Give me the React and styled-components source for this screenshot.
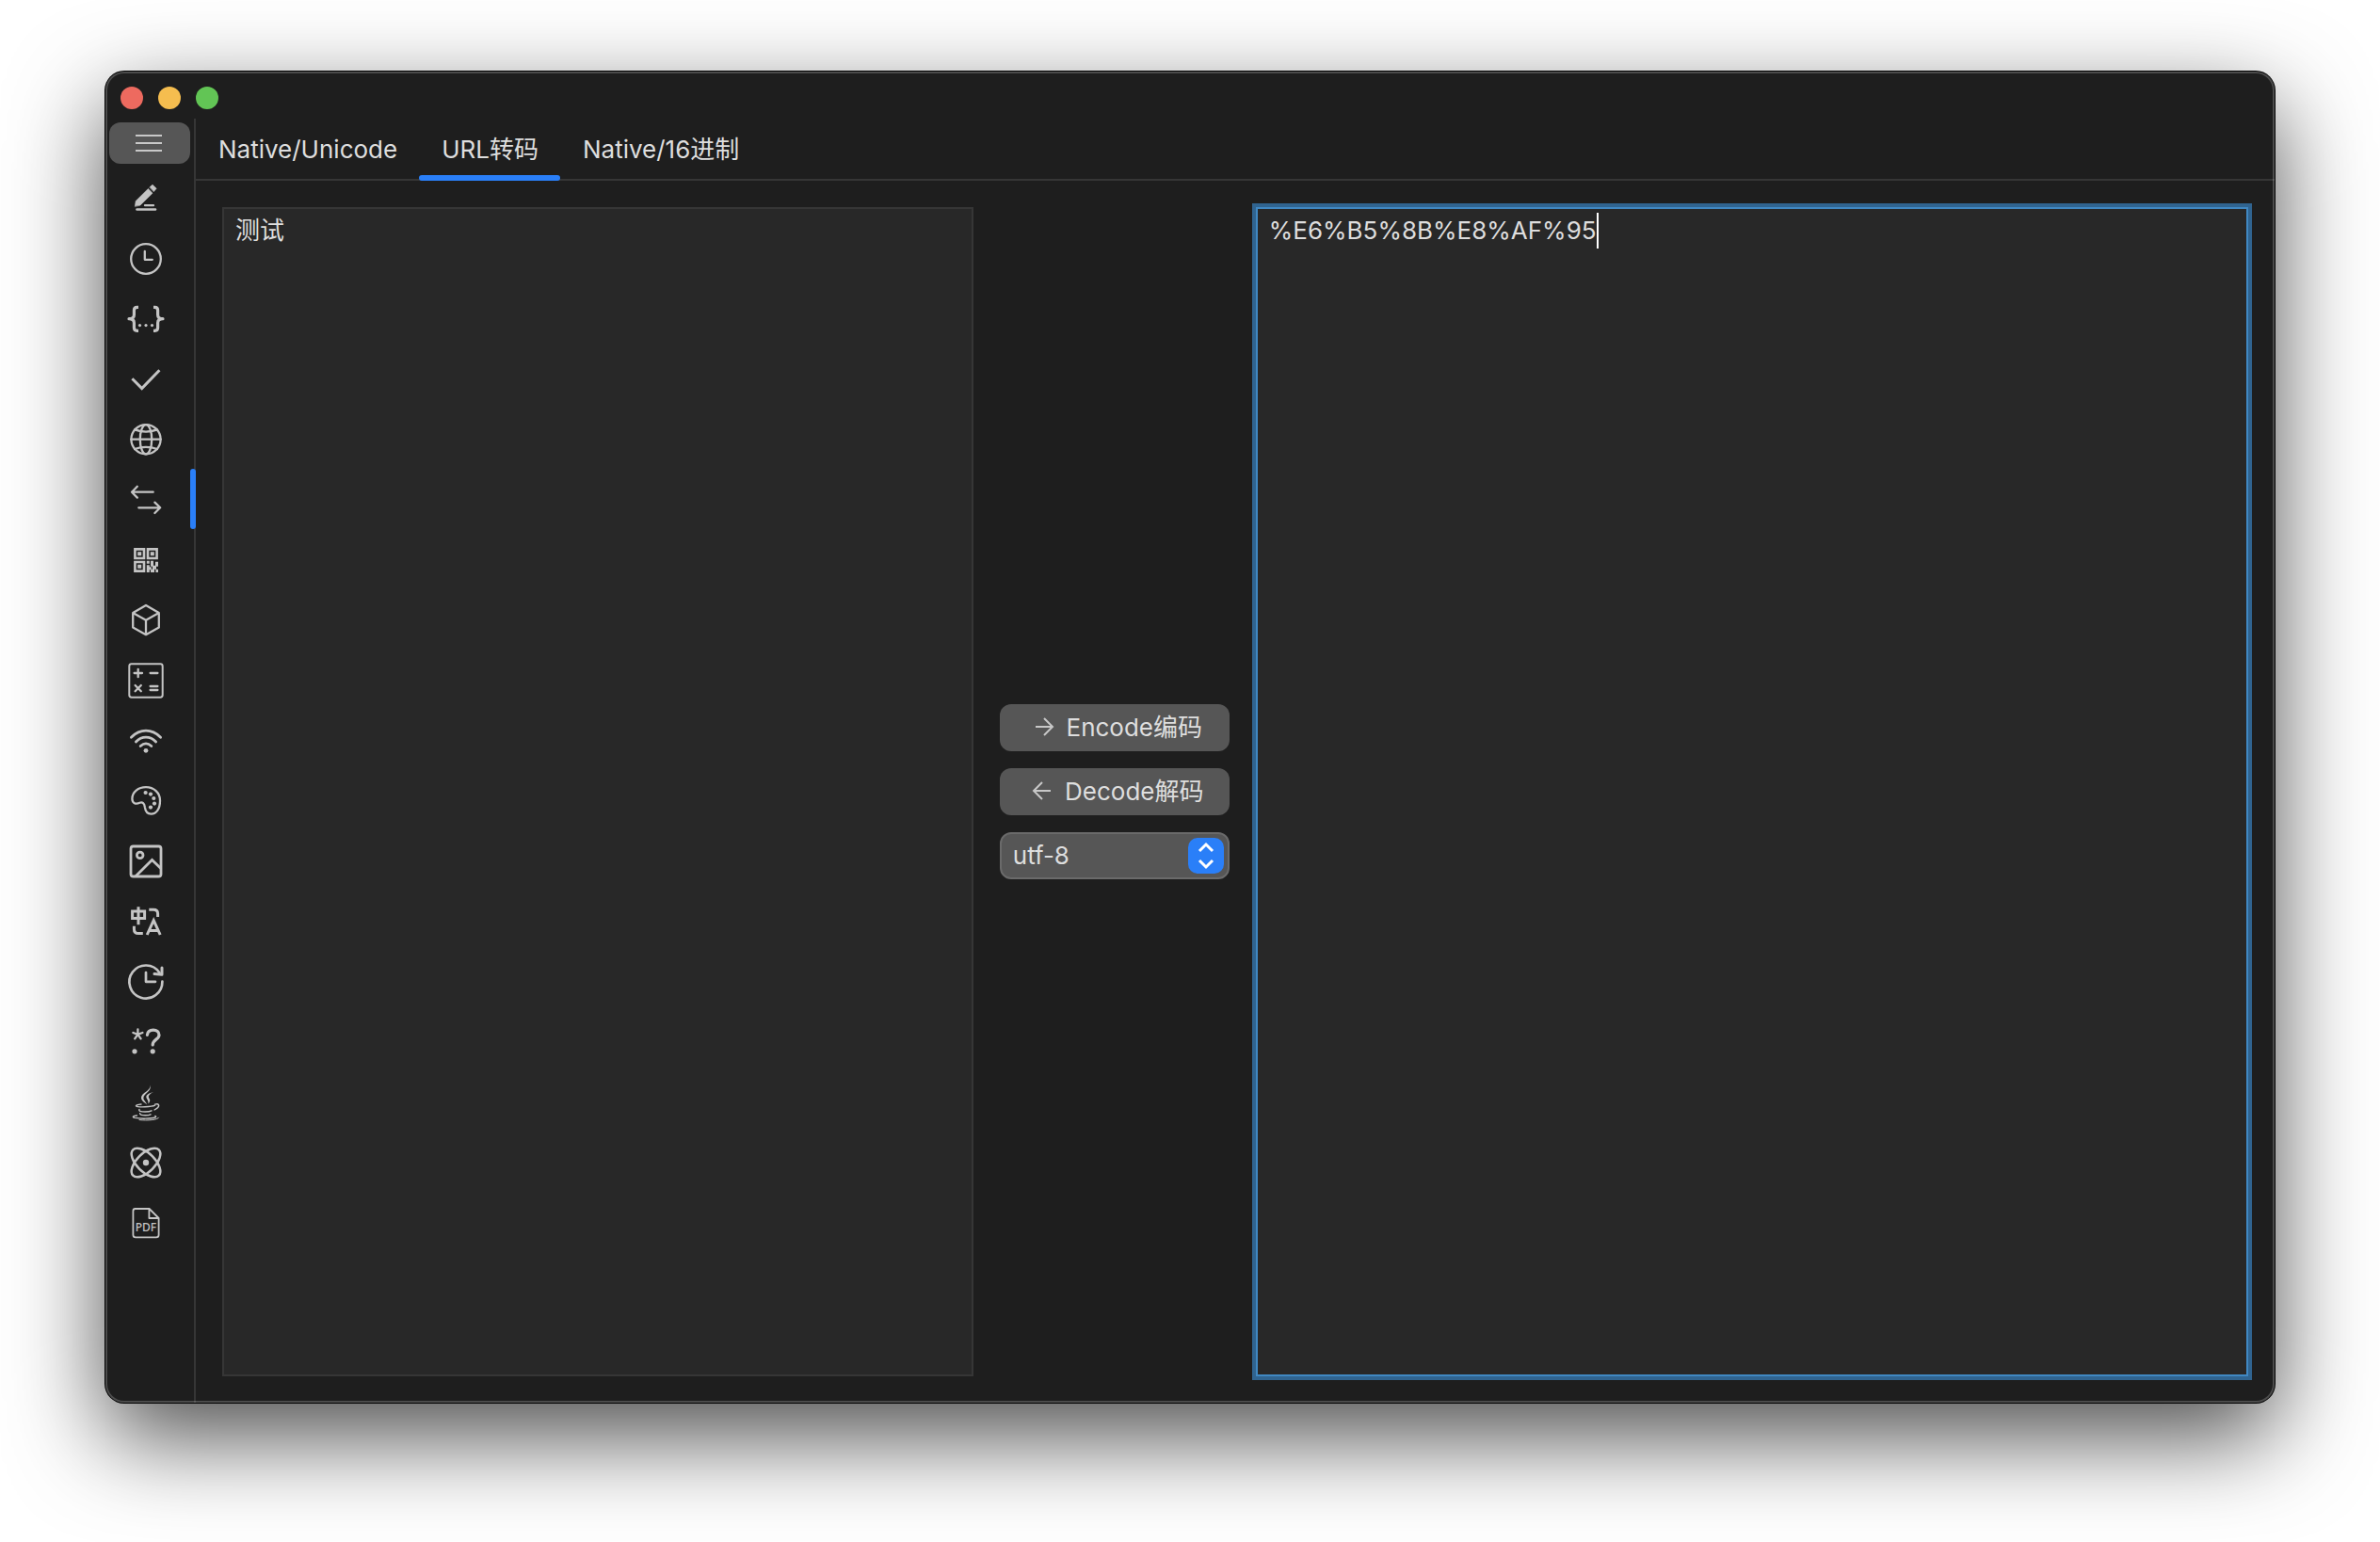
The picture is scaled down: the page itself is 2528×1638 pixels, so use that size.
import { useEffect, useRef, useState } from 'react';
import styled, { createGlobalStyle, css } from 'styled-components';

//ICONS
const icons = {
  edit: (
    <>
      <path
        d='M8.4 29 L9.2 23.6 L22.4 10.4 L27 15.2 L14 28 Z M24 8.8 L27 6.2 L31.2 10.2 L28.4 13.4 Z'
        fill='currentColor'
        strokeWidth='0.6'
      />
      <path d='M19 28.2 H28' />
      <path d='M10.5 32.5 H30' strokeWidth='2.6' />
    </>
  ),
  clock: (
    <>
      <circle cx='20' cy='21' r='15.8' />
      <path d='M18.8 13 V21.8 H26.8' />
    </>
  ),
  json: (
    <>
      <path
        d='M12 8.3 H10.5 Q7.4 8.3 7.4 11.5 V16.5 Q7.4 20.7 2 20.7 Q7.4 20.7 7.4 25 V30 Q7.4 33.3 10.5 33.3 H12'
        strokeWidth='3.2'
        strokeLinecap='butt'
      />
      <path
        d='M28 8.3 H29.5 Q32.6 8.3 32.6 11.5 V16.5 Q32.6 20.7 38 20.7 Q32.6 20.7 32.6 25 V30 Q32.6 33.3 29.5 33.3 H28'
        strokeWidth='3.2'
        strokeLinecap='butt'
      />
      <g fill='currentColor' stroke='none'>
        <circle cx='13.5' cy='27.6' r='1.6' />
        <circle cx='20' cy='27.6' r='1.6' />
        <circle cx='26.5' cy='27.6' r='1.6' />
      </g>
    </>
  ),
  check: (
    <path
      d='M5.4 20.2 L15.7 30.6 L34.4 11.3'
      strokeWidth='3'
      strokeLinecap='butt'
      strokeLinejoin='miter'
    />
  ),
  globe: (
    <>
      <circle cx='20' cy='20.7' r='15.6' />
      <ellipse cx='20' cy='20.7' rx='6.2' ry='15.6' />
      <path d='M4.3 20.7 H35.7 M8 10.4 Q20 14.8 32 10.4 M8 31 Q20 26.6 32 31' />
    </>
  ),
  swap: (
    <path d='M27.7 12.7 H5 M10.8 6.8 L5 12.7 L10.8 18.6 M12.3 29.3 H35.2 M29.4 23.6 L35.2 29.3 L29.4 35' />
  ),
  qrcode: (
    <>
      <path
        d='M8.4 9.4 H18 V19 H8.4 Z M22 9.4 H31.6 V19 H22 Z M8.4 23 H18 V32.6 H8.4 Z'
        strokeWidth='2.6'
        strokeLinejoin='miter'
      />
      <path
        d='M11.2 12.2h4v4h-4z M24.8 12.2h4v4h-4z M11.2 25.8h4v4h-4z M20.8 21.8h3v3h-3z M25 21.8h3v5h2v-4h3v5h-2v3h-4v-3h-2z M20.8 26.3h3v2h2v3h-2v2.6h-3z M25 30.7h4v3.2h-4z M30.4 30.7h2.6v3.2h-2.6z'
        fill='currentColor'
        stroke='none'
      />
    </>
  ),
  cube: (
    <path d='M20 5 L33.8 13 V28.6 L20 36.2 L6.2 28.6 V13 Z M6.2 13 L20 20.8 L33.8 13 M20 20.8 V36.2' />
  ),
  calculator: (
    <>
      <rect x='2.3' y='3.3' width='35.4' height='35.4' rx='2.4' strokeWidth='2' />
      <path d='M7.6 13 H16 M11.7 8.8 V17.2 M24.6 13 H32.4 M8.6 26 L14.8 32.2 M14.8 26 L8.6 32.2 M24.6 27 H32.4 M24.6 31 H32.4' />
    </>
  ),
  wifi: (
    <>
      <path
        d='M4.4 17.2 Q11.5 10.2 20 10.2 Q28.5 10.2 35.6 17.2 M9.4 22 Q14 17.2 20 17.2 Q26 17.2 30.6 22 M14.2 26.6 Q20 21.2 25.8 26.6'
        strokeWidth='2.8'
      />
      <circle cx='20' cy='31.3' r='2.4' fill='currentColor' stroke='none' />
    </>
  ),
  palette: (
    <>
      <path d='M20 6.2 C28.4 6.2 35 12 35 20.4 C35 29.5 31 34.7 25.5 34.7 C21 34.7 19.3 31 18.8 27.2 C18.4 23.4 16.4 21.6 13.4 22.8 C9.2 24.6 5.4 23.4 5.4 18.6 C5.4 11.4 12 6.2 20 6.2 Z' />
      <g fill='currentColor' stroke='none'>
        <circle cx='19.6' cy='12' r='2.1' />
        <circle cx='25' cy='13.6' r='2.1' />
        <circle cx='28.3' cy='18' r='2.1' />
        <circle cx='29' cy='23.6' r='2.1' />
        <circle cx='25' cy='27.6' r='2.1' />
      </g>
    </>
  ),
  image: (
    <g strokeWidth='2.8'>
      <rect x='4' y='5' width='32' height='32' rx='2.6' />
      <circle cx='13.7' cy='14.4' r='3.3' />
      <path d='M9.4 36.4 L26.5 19.4 L35.6 28.3' strokeLinejoin='miter' />
    </g>
  ),
  translate: (
    <g strokeWidth='3' strokeLinecap='butt' strokeLinejoin='miter'>
      <path d='M5.6 10 H18.6 V17.4 H5.6 Z M12 5.3 V24.2' />
      <path d='M23.3 8.2 H28 Q32.6 8.2 32.6 12.5 V16 M7.4 25.8 V29 Q7.4 33.6 12 33.6 H16.8' />
      <path d='M21.2 35 L28.2 19.6 L35.2 35 M23.6 30.4 H32.8' />
    </g>
  ),
  history: (
    <g strokeWidth='2.7'>
      <path d='M37.4 20.6 A17.5 17.5 0 1 1 34.4 11.2' />
      <path d='M37 6 V13.2 L29 12.6' strokeWidth='3' />
      <path d='M20 11 V20.8 H30' />
    </g>
  ),
  regex: (
    <>
      <path d='M11.4 12.8 V7.4 M11.4 12.8 L6.4 11 M11.4 12.8 L16.4 11 M11.4 12.8 L8.2 17.4 M11.4 12.8 L14.6 17.4' />
      <path
        d='M21.4 13.4 C21.8 9.8 24.4 8.2 27.8 8.2 C31.4 8.2 34 10.2 34 13.4 C34 18.4 27.2 18 27.2 24'
        strokeWidth='3.2'
      />
      <circle cx='8' cy='30.8' r='2.6' fill='currentColor' stroke='none' />
      <circle cx='27.2' cy='30.8' r='2.6' fill='currentColor' stroke='none' />
    </>
  ),
  java: (
    <>
      <path
        d='M24.6 2.4 C26.6 9.6 17.2 11.4 17.4 16.4 C17.5 19 20.4 20.4 21.2 23.4 C18.6 21.2 15 19.4 15 16 C15 10.6 25.4 8.8 24.6 2.4 Z M28 10 C23.6 11 19.8 13 20.4 15.8 C20.8 17.6 23 18.8 22.4 22.6 C24 20.8 25 18.8 23.6 17 C21.6 14.4 23.8 12 28 10 Z'
        fill='currentColor'
        stroke='none'
      />
      <g strokeWidth='1.4'>
        <path d='M15 23 C10.4 23.4 9 24.4 9.6 25 C11.4 26.4 26 26 29.6 24.2' />
        <path d='M29.6 23.2 C33.4 21.6 35.4 24.6 31.6 27.4 L29 29' />
        <path d='M13 28.4 C12 30.2 14.4 31 19 31 C22.4 31 25 30.4 26 29.8' />
        <path d='M13.6 32.6 C13.4 34.4 16 34.8 19.4 34.8 C21.8 34.8 24 34.4 25 33.8' />
        <path d='M10.4 35 C6.2 35.2 5 36.6 8 37.4 C14 38.6 26 38.4 29.8 37 C31.4 36.2 30.4 35.6 29.8 35.4' />
        <path d='M13 39.6 C22 40.6 32.6 39.6 33.6 37.2' strokeWidth='1' />
      </g>
    </>
  ),
  atom: (
    <>
      <g strokeWidth='2.5'>
        <ellipse cx='20' cy='21' rx='19.4' ry='9.6' transform='rotate(45 20 21)' />
        <ellipse cx='20' cy='21' rx='19.4' ry='9.6' transform='rotate(-45 20 21)' />
      </g>
      <circle cx='20' cy='21' r='3.2' fill='currentColor' stroke='none' />
    </>
  ),
  pdf: (
    <>
      <path
        d='M8.6 6 H23.6 L33.6 16 V33.8 Q33.6 36.4 31 36.4 H9 Q6.4 36.4 6.4 33.8 V8.4 Q6.4 6 8.6 6 Z M23.4 6 V16 H33.6'
        strokeWidth='1.8'
      />
      <text x='20' y='30' textAnchor='middle'>
        PDF
      </text>
    </>
  ),
};

const navItems = [
  { id: 'edit', label: 'Notes' },
  { id: 'clock', label: 'Timestamp' },
  { id: 'json', label: 'JSON' },
  { id: 'check', label: 'Check' },
  { id: 'globe', label: 'Network' },
  { id: 'swap', label: 'Encoding' },
  { id: 'qrcode', label: 'QR code' },
  { id: 'cube', label: 'Crypto' },
  { id: 'calculator', label: 'Calculator' },
  { id: 'wifi', label: 'Wi-Fi' },
  { id: 'palette', label: 'Colors' },
  { id: 'image', label: 'Images' },
  { id: 'translate', label: 'Translate' },
  { id: 'history', label: 'Cron' },
  { id: 'regex', label: 'Regex' },
  { id: 'java', label: 'Java' },
  { id: 'atom', label: 'Variables' },
  { id: 'pdf', label: 'PDF' },
];

const tabs = ['Native/Unicode', 'URL转码', 'Native/16进制'];

const FONT_STACK = "Inter, 'Noto Sans CJK SC', sans-serif";

const App = () => {
  const [page, setPage] = useState('swap');
  const [tab, setTab] = useState('URL转码');
  const [source, setSource] = useState('测试');
  const [result, setResult] = useState('%E6%B5%8B%E8%AF%95');
  const [charset, setCharset] = useState('utf-8');
  const [caretX, setCaretX] = useState(0);
  const resultRef = useRef(null);

  // keep the caret at the end of the line
  useEffect(() => {
    const ctx = document.createElement('canvas').getContext('2d');
    ctx.font = getComputedStyle(resultRef.current).font;
    setCaretX(Math.round(ctx.measureText(result).width));
  }, [result]);

  return (
    <>
      <GlobalStyle />
      <StyledDesktop>
        <StyledWindow>
          <StyledTitleBar>
            <StyledLight $color='#ed6a5f' aria-label='Close' />
            <StyledLight $color='#f5bd4f' aria-label='Minimize' />
            <StyledLight $color='#62c555' aria-label='Zoom' />
          </StyledTitleBar>
          <StyledBody>
            <StyledSidebar>
              <StyledMenuButton aria-label='Menu'>
                <svg width='28' height='18' viewBox='0 0 28 18'>
                  <path
                    d='M0 1 H28 M0 9 H28 M0 17 H28'
                    stroke='currentColor'
                    strokeWidth='2'
                  />
                </svg>
              </StyledMenuButton>
              {navItems.map(({ id, label }) => (
                <StyledNavButton
                  key={id}
                  aria-label={label}
                  $active={page === id}
                  onClick={() => setPage(id)}
                >
                  <StyledIcon viewBox='0 0 40 40'>{icons[id]}</StyledIcon>
                </StyledNavButton>
              ))}
            </StyledSidebar>
            <StyledMain>
              <StyledTabs>
                {tabs.map((name) => (
                  <StyledTab
                    key={name}
                    $active={tab === name}
                    onClick={() => setTab(name)}
                  >
                    {name}
                  </StyledTab>
                ))}
              </StyledTabs>
              <StyledPanel>
                <StyledTextArea
                  aria-label='Source'
                  spellCheck={false}
                  value={source}
                  onChange={(e) => setSource(e.target.value)}
                />
                <StyledActions>
                  <StyledButton onClick={() => setResult(encodeURIComponent(source))}>
                    <svg width='28' height='28' viewBox='0 0 28 28'>
                      <path d='M5 13 H23 M14 4 L23 13 L14 22' />
                    </svg>
                    Encode编码
                  </StyledButton>
                  <StyledButton onClick={() => setSource(decodeURIComponent(result))}>
                    <svg width='28' height='28' viewBox='0 0 28 28'>
                      <path d='M23 13 H5 M14 4 L5 13 L14 22' />
                    </svg>
                    Decode解码
                  </StyledButton>
                  <StyledSelectWrap>
                    <StyledSelect
                      aria-label='Charset'
                      value={charset}
                      onChange={(e) => setCharset(e.target.value)}
                    >
                      <option>utf-8</option>
                      <option>gbk</option>
                    </StyledSelect>
                    <StyledStepper>
                      <svg width='38' height='38' viewBox='0 0 38 38'>
                        <path d='M12 14 L19 7 L26 14 M12 24 L19 31 L26 24' />
                      </svg>
                    </StyledStepper>
                  </StyledSelectWrap>
                </StyledActions>
                <StyledField>
                  <StyledTextArea
                    ref={resultRef}
                    aria-label='Result'
                    spellCheck={false}
                    $focused
                    value={result}
                    onChange={(e) => setResult(e.target.value)}
                  />
                  <StyledCaret style={{ marginLeft: caretX }} />
                </StyledField>
              </StyledPanel>
            </StyledMain>
          </StyledBody>
        </StyledWindow>
      </StyledDesktop>
    </>
  );
};

export default App;

const GlobalStyle = createGlobalStyle`
  * {
    box-sizing: border-box;
  }
  body {
    margin: 0;
    background-color: #ffffff;
  }
  button, select, textarea {
    margin: 0;
    font-family: ${FONT_STACK};
    font-size: 26px;
    line-height: 30px;
    color: #dedede;
  }
  button {
    padding: 0;
    border: none;
    background: none;
  }
`;

const StyledDesktop = styled.div`
  display: flex;
  min-height: 100vh;
  padding: 76px 112px 148px;
  overflow: hidden;
`;

const StyledWindow = styled.div`
  flex: 1;
  min-width: 0;
  display: flex;
  flex-direction: column;
  position: relative;
  border-radius: 20px;
  background-color: #1e1e1e;
  box-shadow: 0 0 0 1px #000000, 0 36px 100px rgba(0, 0, 0, 0.7);

  /* light rim over the content */
  &::after {
    content: '';
    position: absolute;
    inset: 0;
    border-radius: 20px;
    box-shadow: inset 0 0 0 2px rgba(255, 255, 255, 0.2);
    pointer-events: none;
  }
`;

const StyledTitleBar = styled.header`
  display: flex;
  align-items: center;
  gap: 16px;
  height: 50px;
  padding: 6px 16px 0;
`;

const StyledLight = styled.button`
  width: 24px;
  height: 24px;
  border-radius: 50%;
  background-color: ${({ $color }) => $color};
`;

const StyledBody = styled.div`
  flex: 1;
  display: flex;
`;

const StyledSidebar = styled.nav`
  flex: none;
  width: 96px;
  border-right: 2px solid #363636;
  padding-top: 4px;
  display: flex;
  flex-direction: column;
`;

const StyledMenuButton = styled.button`
  display: flex;
  align-items: center;
  justify-content: center;
  height: 44px;
  margin: 0 4px 4px;
  padding-right: 2px;
  border-radius: 12px;
  background-color: #565656;
  color: #c8c8c8;
`;

const StyledNavButton = styled.button`
  display: flex;
  align-items: center;
  justify-content: center;
  position: relative;
  height: 64px;
  padding-right: 8px;
  color: #c4c4c4;

  ${({ $active }) =>
    $active &&
    css`
      &::after {
        content: '';
        position: absolute;
        top: 0;
        right: -2px;
        width: 6px;
        height: 100%;
        border-radius: 3px;
        background-color: #2a7ff8;
      }
    `}
`;

const StyledIcon = styled.svg`
  width: 40px;
  height: 40px;
  overflow: visible;
  fill: none;
  stroke: currentColor;
  stroke-width: 2.3;
  stroke-linecap: round;
  stroke-linejoin: round;
  text {
    font-family: 'Noto Sans', sans-serif;
    font-size: 12px;
    font-weight: 500;
    fill: currentColor;
    stroke: none;
  }
`;

const StyledMain = styled.main`
  flex: 1;
  min-width: 0;
  display: flex;
  flex-direction: column;
`;

const StyledTabs = styled.div`
  display: flex;
  height: 66px;
  border-bottom: 2px solid #363636;
`;

const StyledTab = styled.button`
  position: relative;
  height: 66px;
  padding: 0 23px 0 24px;
  white-space: nowrap;

  ${({ $active }) =>
    $active &&
    css`
      &::after {
        content: '';
        position: absolute;
        left: 0;
        bottom: 0;
        width: 100%;
        height: 6px;
        border-radius: 3px;
        background-color: #2a7ff8;
      }
    `}
`;

const StyledPanel = styled.section`
  flex: 1;
  display: grid;
  grid-template-columns: 28fr 244px 37fr;
  gap: 28px;
  padding: 28px;
`;

const StyledTextArea = styled.textarea`
  display: block;
  width: 100%;
  height: 100%;
  padding: 8px 12px;
  border: 2px solid #363636;
  border-radius: 0;
  background-color: #282828;
  outline: none;
  resize: none;

  ${({ $focused }) =>
    $focused &&
    css`
      border-color: #4088c2;
      box-shadow: 0 0 0 4px #306490;
      caret-color: transparent;
    `}
`;

const StyledField = styled.div`
  position: relative;
`;

const StyledCaret = styled.span`
  position: absolute;
  top: 6px;
  left: 14px;
  width: 2px;
  height: 38px;
  background-color: #ffffff;
  pointer-events: none;
`;

const StyledActions = styled.div`
  display: flex;
  flex-direction: column;
  justify-content: center;
  gap: 18px;
`;

const StyledButton = styled.button`
  display: flex;
  align-items: center;
  justify-content: center;
  gap: 10px;
  height: 50px;
  padding-left: 4px;
  border-radius: 12px;
  background-color: #565656;
  white-space: nowrap;
  svg {
    fill: none;
    stroke: #c8c8c8;
    stroke-width: 2;
  }
`;

const StyledSelectWrap = styled.div`
  position: relative;
`;

const StyledSelect = styled.select`
  display: block;
  appearance: none;
  width: 100%;
  height: 50px;
  padding: 0 50px 0 12px;
  border: 2px solid #6a6a6a;
  border-radius: 12px;
  background-color: #565656;
`;

const StyledStepper = styled.span`
  position: absolute;
  top: 6px;
  right: 6px;
  width: 38px;
  height: 38px;
  border-radius: 10px;
  background-color: #2a7ff8;
  pointer-events: none;
  svg {
    display: block;
    fill: none;
    stroke: #ffffff;
    stroke-width: 3;
  }
`;
